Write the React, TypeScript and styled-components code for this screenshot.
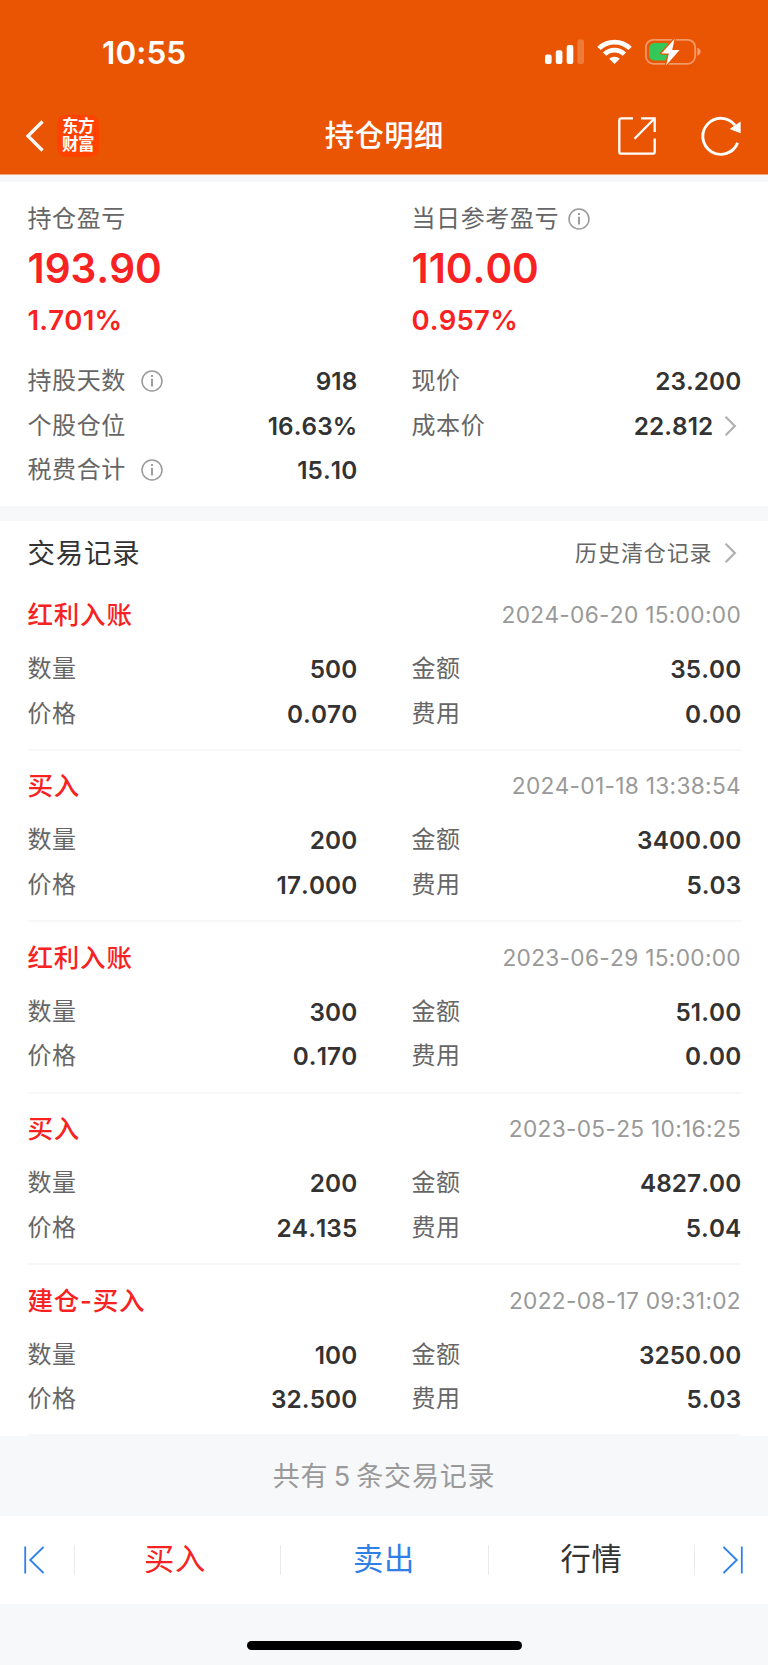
import React from "react";
import styled, { createGlobalStyle } from "styled-components";

const GlobalStyle = createGlobalStyle`
  * { box-sizing: border-box; }
  body {
    margin: 0;
    background: #f7f8fa;
    font-family: Inter, "Noto Sans CJK SC", sans-serif;
    font-kerning: none;
    color: #333;
  }
`;

const Page = styled.div`
  width: 768px;
  height: 1665px;
  display: flex;
  flex-direction: column;
  overflow: hidden;
  background: #f7f8fa;
`;

const Header = styled.header`
  height: 175px;
  flex: none;
  background: #ea5504;
  border-bottom: 1px solid #f1a27b;
  color: #fff;
  display: flex;
  flex-direction: column;
`;

const StatusBar = styled.div`
  height: 96px;
  display: flex;
  align-items: center;
  justify-content: space-between;
  padding: 8px 66px 0 102px;
`;

const Clock = styled.span`
  font-size: 31.5px;
  font-weight: 600;
  line-height: 40px;
  letter-spacing: 0.1px;
  padding-top: 2px;
`;

const StatusIcons = styled.div`
  display: flex;
  align-items: center;
  gap: 13px;
`;

const NavBar = styled.div`
  height: 78px;
  display: grid;
  grid-template-columns: 1fr auto 1fr;
  align-items: center;
  padding: 1px 27.5px 0 25px;
`;

const NavSide = styled.div<{ $end?: boolean; $gap: number }>`
  display: flex;
  align-items: center;
  justify-content: ${(p) => (p.$end ? "flex-end" : "flex-start")};
  gap: ${(p) => p.$gap}px;
`;

const Logo = styled.div`
  width: 42px;
  height: 42px;
  border-radius: 9px;
  background: #ff4200;
  display: flex;
  flex-direction: column;
  align-items: center;
  justify-content: center;
  padding-bottom: 1px;
  font-size: 16.5px;
  font-weight: 700;
  line-height: 18px;
  letter-spacing: -0.4px;
`;

const NavTitle = styled.h1`
  margin: 0;
  padding: 1px 0 0 3px;
  font-size: 29.3px;
  font-weight: 500;
  line-height: 40px;
  letter-spacing: 0.5px;
`;

const Summary = styled.section`
  flex: none;
  height: 323.5px;
  margin-top: 7px;
  padding: 19px 27.5px 0;
  background: #fff;
`;

const Columns = styled.div`
  display: grid;
  grid-template-columns: 329px 329px;
  column-gap: 55px;
`;

const Label = styled.span`
  display: flex;
  align-items: center;
  font-size: 24px;
  line-height: 36px;
  letter-spacing: 0.6px;
  color: #666;
`;

const Profit = styled.div`
  margin-top: 7px;
  font-size: 40.5px;
  font-weight: 600;
  line-height: 50px;
  color: #f82222;
`;

const Percent = styled.div`
  margin-top: 8px;
  font-size: 27.5px;
  font-weight: 600;
  line-height: 36px;
  letter-spacing: 0.2px;
  color: #f82222;
`;

const Stats = styled(Columns)`
  margin-top: 21px;
`;

const Row = styled.div`
  height: 44.6px;
  display: flex;
  align-items: center;
  justify-content: space-between;
`;

const Value = styled.span`
  display: flex;
  align-items: center;
  margin-right: -0.8px;
  font-size: 24.3px;
  font-weight: 600;
  line-height: 36px;
  letter-spacing: 0.1px;
  color: #333;
`;

const Records = styled.section`
  flex: none;
  height: 915.5px;
  margin-top: 15px;
  padding: 0 27.5px;
  background: #fff;
`;

const RecordsHead = styled.div`
  height: 66px;
  display: flex;
  align-items: center;
  justify-content: space-between;
  padding-bottom: 2px;
`;

const RecordsTitle = styled.h2`
  margin: 0;
  font-size: 27.4px;
  font-weight: 400;
  line-height: 40px;
  letter-spacing: 0.9px;
`;

const HistoryLink = styled.span`
  display: flex;
  align-items: center;
  font-size: 22px;
  line-height: 36px;
  letter-spacing: 0.9px;
  color: #666;
`;

const Record = styled.article`
  height: 171.4px;
  padding-top: 7px;
  border-bottom: 2px solid #f7f8fa;

  &:first-of-type {
    height: 164.4px;
    padding-top: 0;
  }
`;

const RecordHead = styled.div`
  height: 60.2px;
  display: flex;
  align-items: center;
  justify-content: space-between;
  padding-bottom: 3px;
`;

const RecordType = styled.span`
  font-size: 25.5px;
  font-weight: 500;
  line-height: 38px;
  letter-spacing: 0.8px;
  color: #f82222;
`;

const Timestamp = styled.time`
  margin-right: -0.5px;
  font-size: 22.7px;
  line-height: 32px;
  letter-spacing: 0.3px;
  color: #999;
`;

const Total = styled.div`
  flex: none;
  height: 80px;
  display: flex;
  align-items: center;
  justify-content: center;
  padding-bottom: 4px;
  font-size: 27px;
  letter-spacing: 0.8px;
  word-spacing: -3px;
  color: #999;
`;

const ActionBar = styled.nav`
  flex: none;
  height: 88px;
  display: grid;
  grid-template-columns: 74px 206px 208px 206px 74px;
  align-items: center;
  background: #fff;
`;

const Action = styled.div<{ $color?: string; $divided?: boolean; $shift?: number }>`
  height: 30px;
  display: flex;
  align-items: center;
  justify-content: center;
  padding-right: ${(p) => p.$shift ?? 0}px;
  font-size: 30.3px;
  line-height: 30px;
  letter-spacing: 0.8px;
  color: ${(p) => p.$color ?? "#333"};
  border-left: ${(p) => (p.$divided ? "1px solid #e9eaec" : "none")};
`;

const ActionText = styled.span`
  padding-bottom: 3px;
`;

const HomeArea = styled.footer`
  flex: 1;
  display: flex;
  justify-content: center;
  padding-top: 37px;
`;

const HomeIndicator = styled.div`
  width: 275px;
  height: 9px;
  border-radius: 5px;
  background: #000;
`;

const InfoSvg = styled.svg<{ $gap: number }>`
  margin-left: ${(p) => p.$gap}px;
`;

const ChevronSvg = styled.svg`
  margin: 0 4px 0 11px;
`;

const Info = ({ gap = 15.5 }: { gap?: number }) => (
  <InfoSvg $gap={gap} width="22" height="22" viewBox="0 0 22 22" fill="none" stroke="#999">
    <circle cx="11" cy="11" r="10" strokeWidth="1.5" />
    <path d="M11 8.8V16.5" strokeWidth="1.9" />
    <path d="M11 5V7" strokeWidth="1.9" />
  </InfoSvg>
);

const Chevron = () => (
  <ChevronSvg width="13" height="20" viewBox="0 0 13 20" fill="none" stroke="#b2b2b2" strokeWidth="2.3">
    <path d="M1.6 0.8L10.8 10L1.6 19.2" />
  </ChevronSvg>
);

const Signal = () => (
  <svg width="39" height="26" viewBox="0 0 39 26" fill="#fff">
    <rect x="0" y="15.5" width="6.6" height="9.5" rx="2" />
    <rect x="10.8" y="11.2" width="6.6" height="13.8" rx="2" />
    <rect x="21.7" y="6" width="6.6" height="19" rx="2" />
    <rect x="32.4" y="0.6" width="6.6" height="24.4" rx="2" opacity="0.22" />
  </svg>
);

const Wifi = () => (
  <svg width="35" height="26" viewBox="0 0 35 26" fill="none" stroke="#fff" strokeWidth="4.8">
    <path d="M1.9 9.4A22.3 22.3 0 0 1 33.1 9.4" />
    <path d="M7.6 15.1A14.2 14.2 0 0 1 27.4 15.1" />
    <path d="M12.2 19.8A7.6 7.6 0 0 1 22.8 19.8L17.5 25Z" fill="#fff" stroke="none" />
  </svg>
);

const Battery = () => (
  <svg width="57" height="28" viewBox="0 0 57 28" fill="none">
    <rect x="0.9" y="1.8" width="49.3" height="24" rx="7.5" stroke="#fff" strokeOpacity="0.4" strokeWidth="1.8" />
    <path d="M52.4 9.8C54.5 10.8 55.6 12.1 55.6 13.8S54.5 16.8 52.4 17.8Z" fill="#fff" fillOpacity="0.45" />
    <path d="M9.5 5H23V22.6H9.5A5.5 5.5 0 0 1 4 17.1V10.5A5.5 5.5 0 0 1 9.5 5Z" fill="#34c759" />
    <path
      d="M29.6 0.8L16.4 15.4H23.8L21.2 27.2L34.6 12H27.2Z"
      fill="#fff"
      stroke="#ea5504"
      strokeWidth="2.6"
      strokeLinejoin="round"
      paintOrder="stroke"
    />
  </svg>
);

const Back = () => (
  <svg width="19" height="32" viewBox="0 0 19 32" fill="none" stroke="#fff" strokeWidth="3.2">
    <path d="M17.5 1.5L3 16L17.5 30.5" />
  </svg>
);

const Share = () => (
  <svg width="38" height="38" viewBox="0 0 38 38" fill="none" stroke="#fff" strokeWidth="2.3">
    <path d="M15 1.3H3.3A2 2 0 0 0 1.3 3.3V34.7A2 2 0 0 0 3.3 36.7H34.7A2 2 0 0 0 36.7 34.7V21.5" />
    <path d="M23 1.3H36.7V15" />
    <path d="M36.3 1.7L16.5 21.8" />
  </svg>
);

const Refresh = () => (
  <svg width="40" height="40" viewBox="0 0 40 40" fill="none">
    <path d="M36.6 26.9A18 18 0 1 1 34 9.2" stroke="#fff" strokeWidth="2.9" />
    <path d="M39.6 5.5V17.2L28.6 13Z" fill="#fff" />
  </svg>
);

const EdgeSvg = styled.svg<{ $flip?: boolean }>`
  margin: ${(p) => (p.$flip ? "0 0 0 1px" : "0 5px 0 0")};
`;

const Edge = ({ flip }: { flip?: boolean }) => (
  <EdgeSvg $flip={flip} width="21" height="28" viewBox="0 0 21 28" fill="none" stroke="#2f80ea" strokeWidth="1.8">
    <g transform={flip ? "matrix(-1 0 0 1 21 0)" : undefined}>
      <path d="M1.2 0.5V27.5" />
      <path d="M19.5 1L6.2 14L19.5 27" />
    </g>
  </EdgeSvg>
);

const records = [
  { type: "红利入账", time: "2024-06-20 15:00:00", qty: "500", amount: "35.00", price: "0.070", fee: "0.00" },
  { type: "买入", time: "2024-01-18 13:38:54", qty: "200", amount: "3400.00", price: "17.000", fee: "5.03" },
  { type: "红利入账", time: "2023-06-29 15:00:00", qty: "300", amount: "51.00", price: "0.170", fee: "0.00" },
  { type: "买入", time: "2023-05-25 10:16:25", qty: "200", amount: "4827.00", price: "24.135", fee: "5.04" },
  { type: "建仓-买入", time: "2022-08-17 09:31:02", qty: "100", amount: "3250.00", price: "32.500", fee: "5.03" },
];

interface FieldProps {
  label: string;
  value: string;
  info?: boolean;
  link?: boolean;
}

const Field = ({ label, value, info, link }: FieldProps) => (
  <Row>
    <Label>
      {label}
      {info && <Info />}
    </Label>
    <Value>
      {value}
      {link && <Chevron />}
    </Value>
  </Row>
);

export default function App() {
  return (
    <Page>
      <GlobalStyle />
      <Header>
        <StatusBar>
          <Clock>10:55</Clock>
          <StatusIcons>
            <Signal />
            <Wifi />
            <Battery />
          </StatusIcons>
        </StatusBar>
        <NavBar>
          <NavSide $gap={13}>
            <Back />
            <Logo>
              <span>东方</span>
              <span>财富</span>
            </Logo>
          </NavSide>
          <NavTitle>持仓明细</NavTitle>
          <NavSide $end $gap={45}>
            <Share />
            <Refresh />
          </NavSide>
        </NavBar>
      </Header>

      <Summary>
        <Columns>
          <div>
            <Label>持仓盈亏</Label>
            <Profit>193.90</Profit>
            <Percent>1.701%</Percent>
          </div>
          <div>
            <Label>
              当日参考盈亏
              <Info gap={8.5} />
            </Label>
            <Profit>110.00</Profit>
            <Percent>0.957%</Percent>
          </div>
        </Columns>
        <Stats>
          <div>
            <Field label="持股天数" value="918" info />
            <Field label="个股仓位" value="16.63%" />
            <Field label="税费合计" value="15.10" info />
          </div>
          <div>
            <Field label="现价" value="23.200" />
            <Field label="成本价" value="22.812" link />
          </div>
        </Stats>
      </Summary>

      <Records>
        <RecordsHead>
          <RecordsTitle>交易记录</RecordsTitle>
          <HistoryLink>
            历史清仓记录
            <Chevron />
          </HistoryLink>
        </RecordsHead>
        {records.map((r) => (
          <Record key={r.time}>
            <RecordHead>
              <RecordType>{r.type}</RecordType>
              <Timestamp>{r.time}</Timestamp>
            </RecordHead>
            <Columns>
              <Field label="数量" value={r.qty} />
              <Field label="金额" value={r.amount} />
              <Field label="价格" value={r.price} />
              <Field label="费用" value={r.fee} />
            </Columns>
          </Record>
        ))}
      </Records>

      <Total>共有 5 条交易记录</Total>

      <ActionBar>
        <Action>
          <Edge />
        </Action>
        <Action $color="#f82222" $divided $shift={5}>
          <ActionText>买入</ActionText>
        </Action>
        <Action $color="#2f7fe6" $divided $shift={1}>
          <ActionText>卖出</ActionText>
        </Action>
        <Action $divided>
          <ActionText>行情</ActionText>
        </Action>
        <Action $divided>
          <Edge flip />
        </Action>
      </ActionBar>

      <HomeArea>
        <HomeIndicator />
      </HomeArea>
    </Page>
  );
}
